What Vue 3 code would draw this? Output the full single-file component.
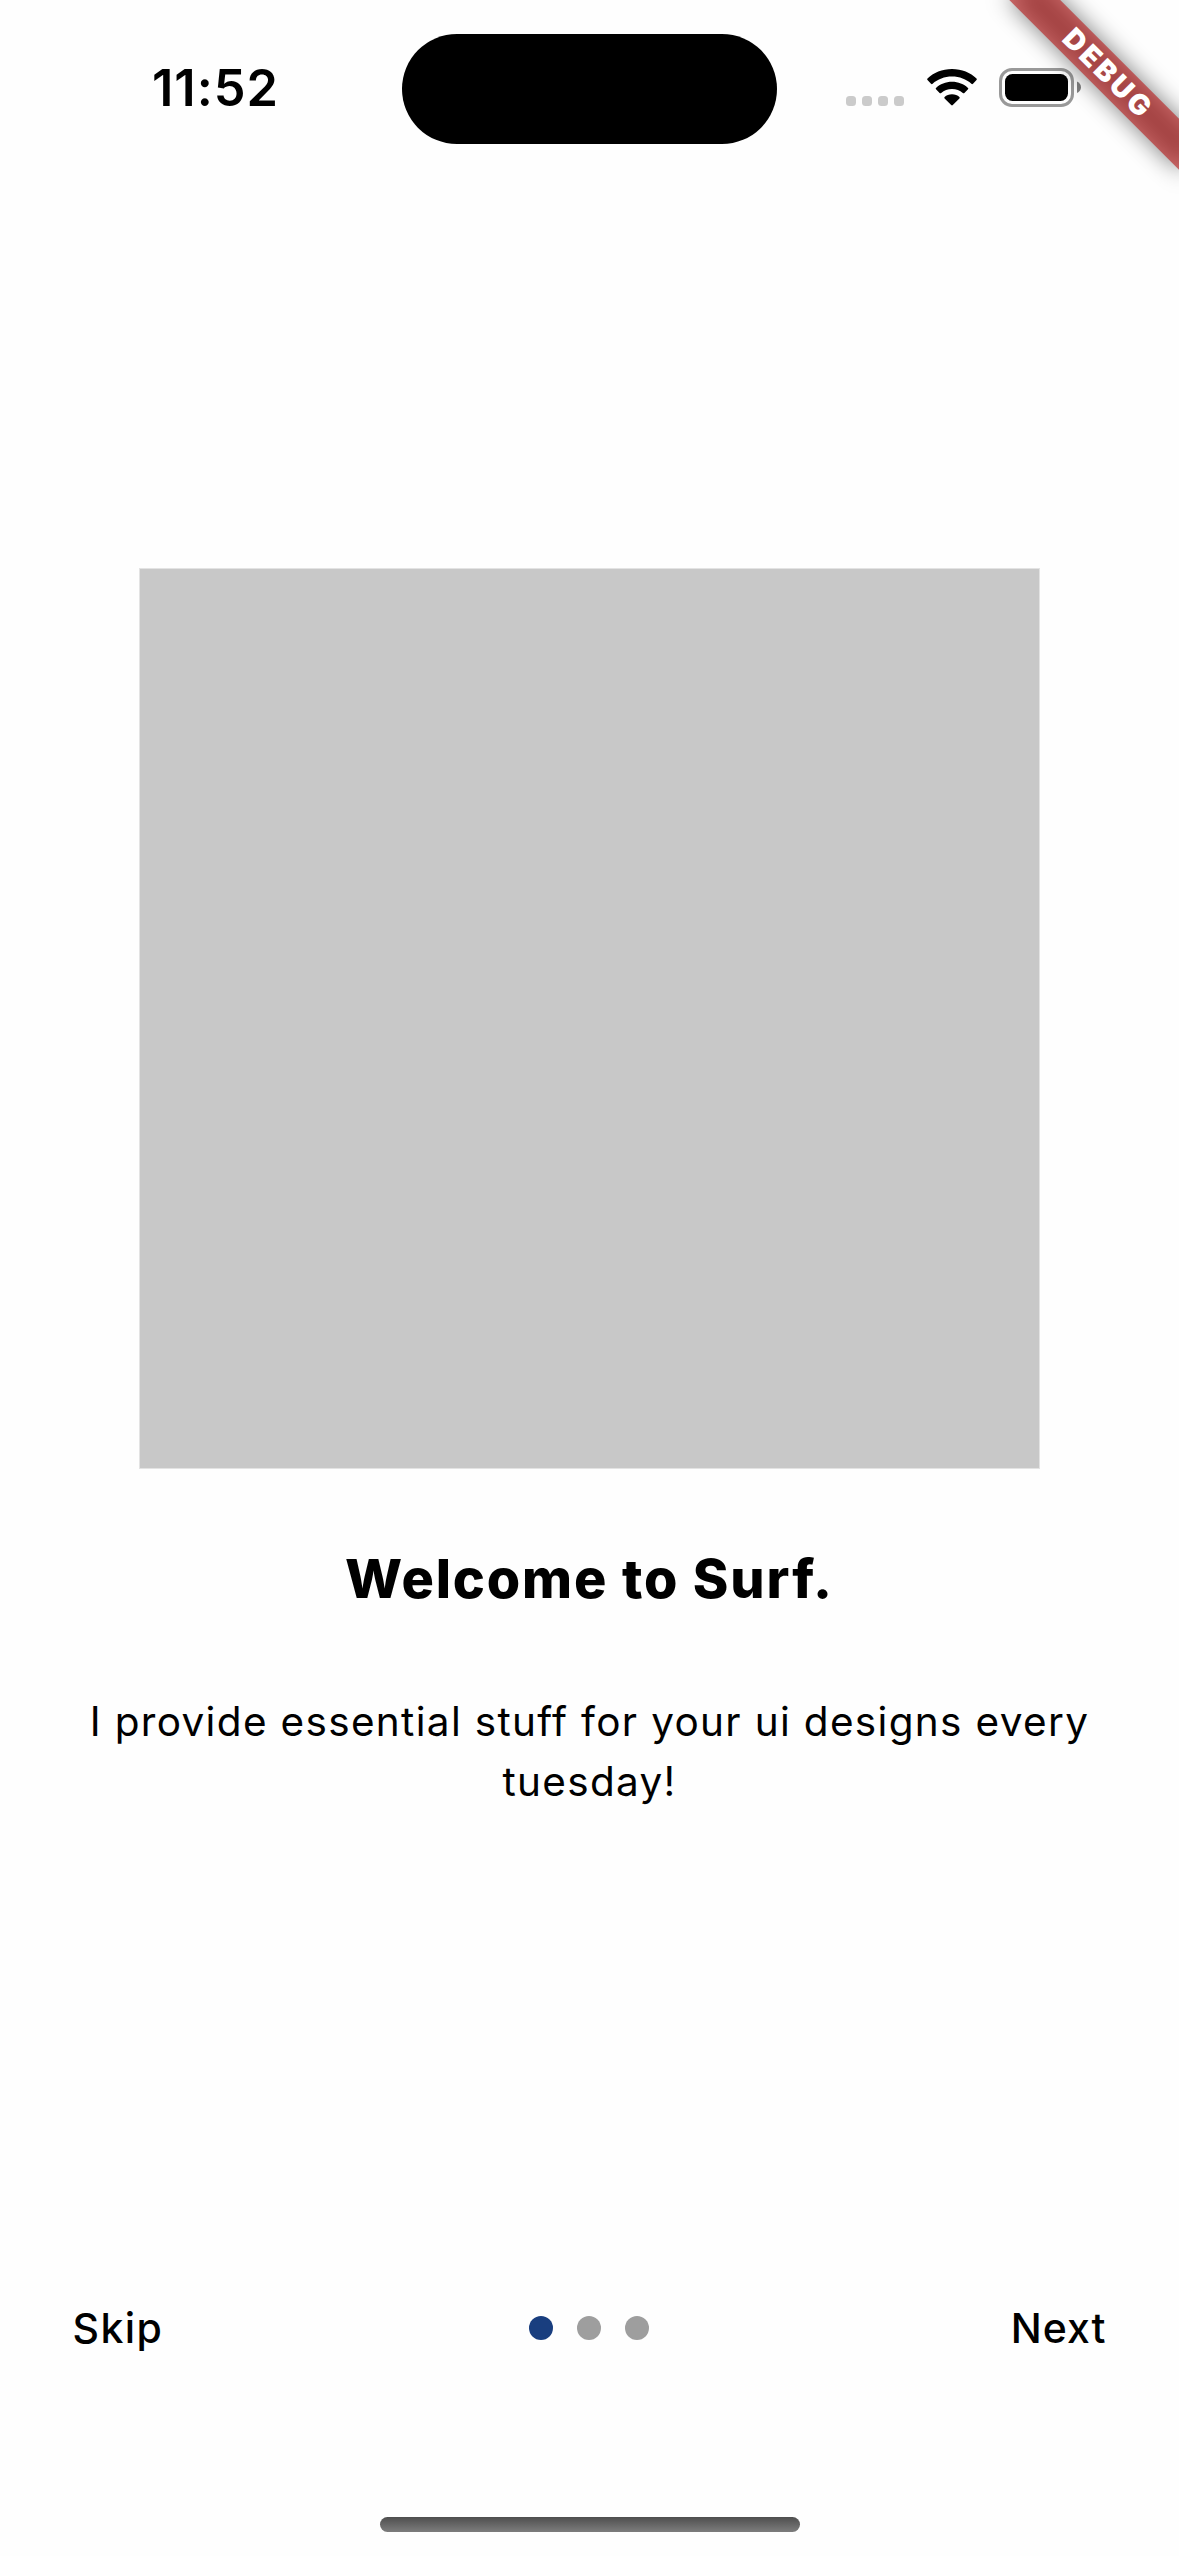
<script setup>
import { ref } from 'vue'

const pages = [
  { title: 'Welcome to Surf.', text: 'I provide essential stuff for your ui designs every tuesday!' },
  { title: '', text: '' },
  { title: '', text: '' },
]
const current = ref(0)
const next = () => { current.value = Math.min(current.value + 1, pages.length - 1) }
const skip = () => { current.value = pages.length - 1 }
</script>

<template>
  <div class="screen">
    <header class="status">
      <div class="side left"><span class="time">11:52</span></div>
      <div class="island"></div>
      <div class="side right">
        <div class="signal"><i v-for="n in 4" :key="n"></i></div>
        <svg class="wifi" width="50" height="37" viewBox="0 0 50 37">
          <path d="M25 0C34.8 0 43.600 3.800 49.500 9.500Q50.200 10.300 49.500 11L46 14.700Q45.200 15.500 44.400 14.800C39.300 10.200 32.500 7.600 25 7.600S10.700 10.200 5.600 14.800Q4.800 15.500 4 14.700L.5 11Q-.2 10.300 .5 9.500C6.400 3.800 15.200 0 25 0Z" />
          <path d="M25 12.800C31.300 12.800 36.900 15.100 41 18.900Q41.700 19.600 41 20.300L37.400 23.900Q36.600 24.600 35.800 23.900C32.900 21.500 29.200 20.100 25 20.100S17.100 21.500 14.200 23.900Q13.400 24.600 12.600 23.900L9 20.300Q8.300 19.600 9 18.900C13.100 15.100 18.700 12.800 25 12.800Z" />
          <path d="M25 25.300C28 25.300 30.600 26.300 32.400 28Q33.100 28.700 32.400 29.400L25.800 36.100Q25 36.900 24.200 36.100L17.600 29.400Q16.900 28.700 17.600 28C19.400 26.300 22 25.300 25 25.300Z" />
        </svg>
        <svg class="battery" width="83" height="39" viewBox="0 0 83 39">
          <rect x="1.500" y="1.500" width="72" height="36" rx="11.500" fill="none" stroke="#999" stroke-width="3" />
          <rect x="6" y="6" width="63" height="27" rx="7.500" />
          <path d="M78 13.500C80.600 14.700 82 17 82 19.300S80.600 24 78 25Z" fill="#808080" />
        </svg>
      </div>
    </header>

    <main class="page">
      <div class="image"></div>
      <h1>{{ pages[current].title }}</h1>
      <p>{{ pages[current].text }}</p>
    </main>

    <nav class="controls">
      <button class="skip" @click="skip">Skip</button>
      <div class="dots">
        <i v-for="(p, n) in pages" :key="n" :class="{ active: n === current }"></i>
      </div>
      <button class="next" @click="next">Next</button>
    </nav>

    <footer class="home"><div class="indicator"></div></footer>

    <div class="corner">
      <div class="ribbon-shadow"></div>
      <div class="ribbon"><span>DEBUG</span></div>
    </div>
  </div>
</template>

<style>
body { margin: 0; background: #fefefe; }
</style>

<style scoped>
.screen {
  position: relative;
  box-sizing: border-box;
  width: 1179px;
  height: 2556px;
  overflow: hidden;
  display: flex;
  flex-direction: column;
  background: #fefefe;
  color: #000;
  font-family: Inter, "Liberation Sans", sans-serif;
}
.status {
  display: flex;
  justify-content: space-between;
  height: 177px;
}
.side { flex: 1; display: flex; }
.island {
  width: 375px;
  height: 110px;
  margin-top: 34px;
  border-radius: 55px;
  background: #000;
}
.time {
  margin: 58px 0 0 152px;
  font-size: 50.5px;
  line-height: 60px;
  font-weight: 600;
  letter-spacing: 1px;
}
.right { align-items: flex-start; }
.signal { display: flex; gap: 6px; margin: 96px 0 0 69px; }
.signal i { width: 10px; height: 10px; border-radius: 3.5px; background: #cbcbcb; }
.wifi { margin: 69px 0 0 23px; }
.battery { margin: 68px 0 0 22px; }

.page {
  display: flex;
  flex-direction: column;
  align-items: center;
  padding: 391px 60px 0;
}
.image {
  box-sizing: border-box;
  width: 901px;
  height: 901px;
  border: 1px solid #e3e3e3;
  background: #c8c8c8;
}
h1 {
  margin: 77px 0 0;
  font-size: 54px;
  line-height: 66px;
  font-weight: 800;
  letter-spacing: 1.85px;
}
p {
  margin: 80px 0 0;
  font-size: 40.5px;
  line-height: 60px;
  font-weight: 400;
  letter-spacing: 1.33px;
  text-align: center;
}
.controls {
  display: flex;
  align-items: center;
  justify-content: space-between;
  height: 60px;
  margin-top: 486px;
  padding: 0 72.5px;
}
button {
  flex: 1;
  padding: 0;
  border: 0;
  background: none;
  color: #000;
  font: 500 41px/60px Inter, "Liberation Sans", sans-serif;
  letter-spacing: 1.4px;
}
.skip { text-align: left; }
.next { text-align: right; letter-spacing: 1px; }
.dots { display: flex; gap: 24px; margin: 0 1px 0 0; }
.dots i { width: 24px; height: 24px; border-radius: 50%; background: #9e9e9e; }
.dots .active { background: #193e7f; }

.home { display: flex; justify-content: center; margin-top: auto; padding-bottom: 24px; }
.indicator {
  width: 420px;
  height: 15px;
  border-radius: 8px;
  background: linear-gradient(#4e4e4e, #7d7d7d);
}

/* Rotated strip pinned to the top right corner */
.corner {
  position: absolute;
  top: 0;
  left: 1179px;
  width: 0;
  height: 0;
  transform: rotate(45deg);
}
.ribbon, .ribbon-shadow {
  position: absolute;
  left: -120px;
  top: 84px;
  width: 240px;
  height: 36px;
}
.ribbon-shadow { background: rgba(0, 0, 0, 0.5); filter: blur(11.9px); }
.ribbon {
  background: rgba(183, 28, 28, 0.627);
  color: #fff;
  font-size: 28.5px;
  line-height: 36px;
  font-weight: 900;
  letter-spacing: 3px;
  text-indent: 4px;
  text-align: center;
}
</style>
